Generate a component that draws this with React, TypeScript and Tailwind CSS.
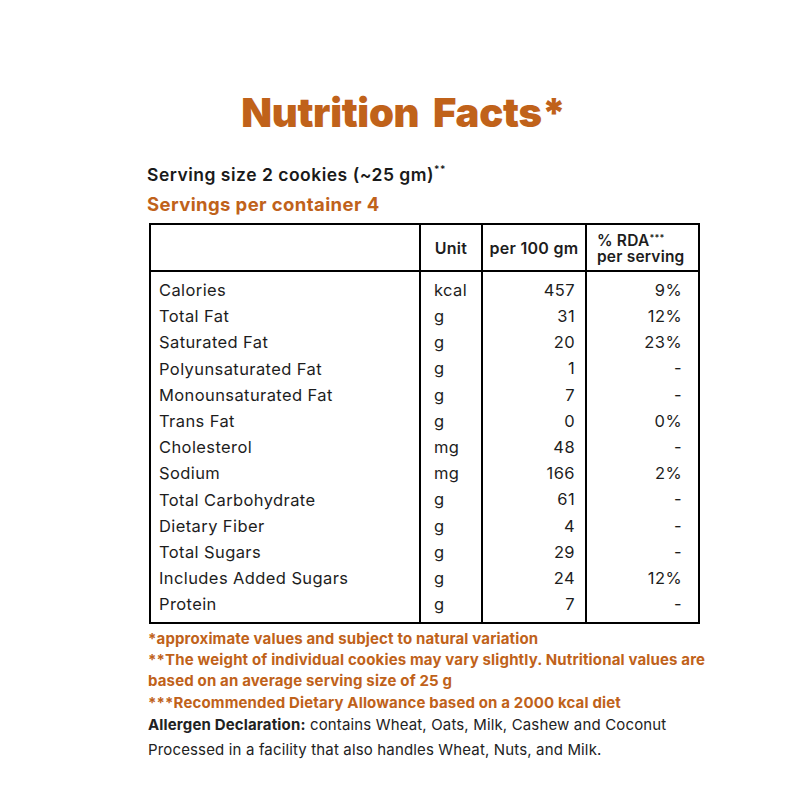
const rows: [string, string, string, string][] = [
  ["Calories", "kcal", "457", "9%"],
  ["Total Fat", "g", "31", "12%"],
  ["Saturated Fat", "g", "20", "23%"],
  ["Polyunsaturated Fat", "g", "1", "-"],
  ["Monounsaturated Fat", "g", "7", "-"],
  ["Trans Fat", "g", "0", "0%"],
  ["Cholesterol", "mg", "48", "-"],
  ["Sodium", "mg", "166", "2%"],
  ["Total Carbohydrate", "g", "61", "-"],
  ["Dietary Fiber", "g", "4", "-"],
  ["Total Sugars", "g", "29", "-"],
  ["Includes Added Sugars", "g", "24", "12%"],
  ["Protein", "g", "7", "-"],
];

export default function App() {
  return (
    <div className="w-[800px] h-[800px] bg-white font-['Inter','Liberation_Sans',sans-serif] text-[#1d1d1d]">
      <div className="pl-[147px] pr-[90px] pt-[88px]">
        {/* Title */}
        <h1 className="text-center pr-[50px] text-[40px] leading-[50px] font-black tracking-[-0.3px] [word-spacing:6px] text-[#c0621a]">
          Nutrition Facts*
        </h1>

        <p className="mt-[26px] text-[17.5px] leading-[22px] font-semibold tracking-[0.5px] text-[#1a1a1a]">
          Serving size 2 cookies (~25 gm)<span className="text-[10px] leading-none align-top">**</span>
        </p>
        <p className="mt-[7px] text-[18.5px] leading-[22px] font-bold tracking-[0.4px] text-[#c0621a]">
          Servings per container 4
        </p>

        {/* Table */}
        <table className="mt-[8px] ml-[2px] w-[551px] border-collapse border-2 border-black text-[16.5px] tracking-[0.4px]">
          <thead>
            <tr className="h-[47px] border-b-2 border-black">
              <th className="w-[270px] border-r-2 border-black"></th>
              <th className="w-[62px] border-r-2 border-black text-center font-semibold text-[16px] tracking-[0.3px]">Unit</th>
              <th className="w-[104px] border-r-2 border-black text-center font-semibold text-[16px] tracking-[0.3px]">per 100 gm</th>
              <th className="text-left pl-[10px] pt-[2px] font-semibold text-[15.5px] leading-[16px] tracking-[0.2px]">
                <div>
                  % RDA<span className="text-[9px] leading-[9px] align-[5px]">***</span>
                </div>
                <div>per serving</div>
              </th>
            </tr>
          </thead>
          <tbody>
            {rows.map(([name, unit, val, rda], i) => (
              <tr key={name} className="h-[26.2px]">
                <td className={`border-r-2 border-black pl-[8px] leading-[26.2px] ${i === 0 ? "pt-[5px]" : ""} ${i === rows.length - 1 ? "pb-[4px]" : ""}`}>
                  {name}
                </td>
                <td className={`border-r-2 border-black pl-[13px] ${i === 0 ? "pt-[5px]" : ""} ${i === rows.length - 1 ? "pb-[4px]" : ""}`}>
                  {unit}
                </td>
                <td className={`border-r-2 border-black pr-[10px] text-right ${i === 0 ? "pt-[5px]" : ""} ${i === rows.length - 1 ? "pb-[4px]" : ""}`}>
                  {val}
                </td>
                <td className={`pr-[16px] text-right ${i === 0 ? "pt-[5px]" : ""} ${i === rows.length - 1 ? "pb-[4px]" : ""}`}>
                  {rda}
                </td>
              </tr>
            ))}
          </tbody>
        </table>

        {/* Footnotes */}
        <div className="mt-[4px] ml-[1px] text-[15px] leading-[21.3px] font-bold tracking-[0.15px] text-[#c0621a]">
          <p>*approximate values and subject to natural variation</p>
          <p>**The weight of individual cookies may vary slightly. Nutritional values are based on an average serving size of 25 g</p>
          <p>***Recommended Dietary Allowance based on a 2000 kcal diet</p>
        </div>
        <p className="ml-[1px] text-[15px] leading-[24px] tracking-[0.15px] text-[#222]">
          <span className="font-bold">Allergen Declaration:</span> contains Wheat, Oats, Milk, Cashew and Coconut
        </p>
        <p className="ml-[1px] text-[15px] leading-[25px] tracking-[0.15px] text-[#222]">
          Processed in a facility that also handles Wheat, Nuts, and Milk.
        </p>
      </div>
    </div>
  );
}
